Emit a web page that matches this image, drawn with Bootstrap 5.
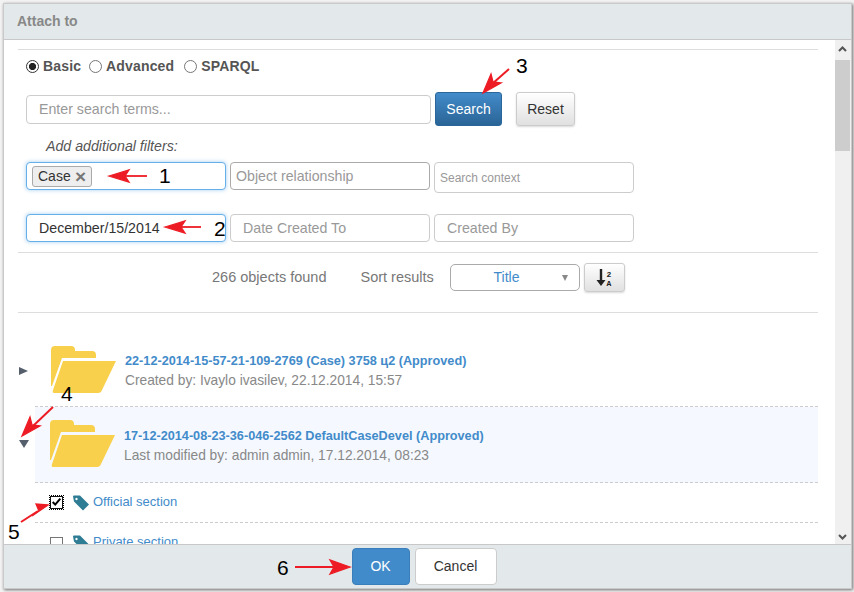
<!DOCTYPE html>
<html lang="en">
<head>
<meta charset="utf-8">
<title>Attach to</title>
<link rel="stylesheet" href="https://cdn.jsdelivr.net/npm/bootstrap@5.3.0/dist/css/bootstrap.min.css">
<style>
html,body{height:100%;margin:0;overflow:hidden}
body{background:#f3f3f3;font-family:"Liberation Sans",Arial,sans-serif;font-size:14px;color:#333;position:relative}
.dlg{position:relative;display:flex;flex-direction:column;width:849px;height:586px;margin:3px 0 0 3px;background:#fff;border:1px solid #c9c9c9;box-shadow:1px 1px 3px rgba(0,0,0,.55)}
.dlg-head{height:36px;flex:none;background:#e3e9ea;border-bottom:1px solid #c8c8c8;padding:0 13px;display:flex;align-items:center;font-weight:700;color:#888}
.dlg-mid{flex:1 1 auto;min-height:0;display:flex}
.pane{flex:1 1 auto;min-width:0;overflow:hidden;padding:9px 17px 0 14px}
.sbar{flex:none;width:16px;background:#f0f0f0;display:flex;flex-direction:column;align-items:stretch;padding-right:1px}
.sbar svg{display:block;margin:6px auto 0}
.thumb{height:91px;margin-top:8px;background:#cdcdcd}
.sbar .down{margin-top:auto;margin-bottom:4px}
.dlg-foot{flex:none;height:44px;background:#e3e9ea;border-top:1px solid #c8c8c8;display:flex;align-items:center;justify-content:center;gap:5px;padding-right:7px}
.rule{height:1px;background:#ddd;margin:0}
.modes{display:flex;align-items:center;padding:0 0 0 8px;height:33px;font-weight:700;color:#555;letter-spacing:.15px}
.modes label{display:flex;align-items:center;gap:4px;margin-right:8px}
.modes label+label{margin-right:10px}
.modes input{width:13px;height:13px;margin:0;border:1px solid #767676;background:#fff}
.modes input:checked{background:radial-gradient(circle,#222 0 3.3px,#fff 3.9px);border-color:#333}
.modes input:focus{box-shadow:none;border-color:#333}
.searchrow{display:flex;align-items:center;margin:9px 0 0 8px;height:34px}
.fld{display:flex;align-items:center;border:1px solid #ccc;border-radius:4px;background:#fff;font-size:14.2px;color:#333;padding:0 12px;box-shadow:none}
.fld::placeholder{color:#999}
input.fld:focus{border-color:#ccc;box-shadow:none}
.fld-q{width:405px;height:29px}
.btn-find,.btn-clear{height:34px;font-size:14px;padding:0;border-radius:3px}
.btn-find{width:67px;margin-left:4px;color:#fff;border:1px solid #2b669a;background:linear-gradient(#428bca,#2a6496)}
.btn-clear{width:59px;margin-left:14px;color:#333;border:1px solid #ccc;background:linear-gradient(#fff,#e0e0e0);box-shadow:0 1px 2px rgba(0,0,0,.15)}
.hint{margin:10px 0 0 28px;height:20px;line-height:20px;font-style:italic;color:#555;font-size:14.2px}
.filters{display:flex;gap:4px;margin:6px 0 0 8px;height:32px;align-items:flex-start}
.filters.second{margin-top:20px;height:28px}
.filters .fld{width:200px;height:28px}
.on{border-color:#66afe9;box-shadow:0 0 4px rgba(102,175,233,.6)}
input.on:focus{border-color:#66afe9;box-shadow:0 0 4px rgba(102,175,233,.6)}
.dark{border-color:#aaa;padding-left:5px}
input.dark:focus{border-color:#aaa}
.chip{display:inline-flex;align-items:center;justify-content:space-between;width:60px;height:21px;padding:0 5px;background:#eee;border:1px solid #aaa;border-radius:3px;margin-left:-7px;color:#333;font-size:14px}
.chip b{color:#777;font-size:19px;line-height:19px}
.filters .ctx{font-size:12px;padding-left:5px;height:31px}
.rule2{margin-top:10px}
.sortrow{display:flex;align-items:center;height:59px;padding:0 0 10px 194px;color:#777;font-size:14.5px}
.sortrow .lbl2{margin-left:34px;width:75px;white-space:nowrap}
.pick{width:130px;height:27px;margin-left:15px;padding:0 18px 0 0;text-align:center;text-align-last:center;font-size:14px;color:#428bca;border:1px solid #aaa;border-radius:5px;background-color:#fff;background-image:url("data:image/svg+xml,%3Csvg xmlns='http://www.w3.org/2000/svg' width='10' height='6'%3E%3Cpath d='M2 0h6l-3 6z' fill='%23888'/%3E%3C/svg%3E");background-position:right 9px center;background-size:10px 6px;background-repeat:no-repeat}
.pick:focus{border-color:#aaa;box-shadow:none}
.btn-order{width:41px;height:29px;margin-left:4px;padding:0;display:flex;align-items:center;justify-content:center;border:1px solid #ccc;border-radius:3px;background:linear-gradient(#fff,#e0e0e0);box-shadow:0 1px 2px rgba(0,0,0,.15)}
.item{display:flex;align-items:center;position:relative;margin-left:17px}
.item1{height:61px;margin-top:33px;border-bottom:1px dashed #ccc;padding-left:16px;align-items:flex-start}
.item2{height:76px;background:#f5f9ff;border-bottom:1px dashed #ccc;padding-left:15px;align-items:flex-start;padding-top:13px}
.item1 .tx{margin:7px 0 0 9px}
.item2 .tx{margin:8px 0 0 9px}
.tx a{display:block;font-weight:700;font-size:12.7px;line-height:16px;color:#428bca;text-decoration:none}
.tx span{display:block;margin-top:4px;font-size:13.75px;line-height:16px;color:#888}
.tri{position:absolute;left:-16px}
.sect{display:flex;align-items:center;height:40px;border-bottom:1px dashed #ccc;margin-left:17px;padding-left:15px}
.sect.last{border:0}
.sect input[type=checkbox]{width:13px;height:13px;margin:0 10px 0 0;border:1px solid #767676;border-radius:0;flex:none}
.sect input[type=checkbox]:checked{background-color:#fff;border-color:#111;outline:1px dotted #000;background-image:url("data:image/svg+xml,%3Csvg xmlns='http://www.w3.org/2000/svg' viewBox='0 0 13 13'%3E%3Cpath d='M2 6l3 3 6-7' fill='none' stroke='%23000' stroke-width='2.4'/%3E%3C/svg%3E")}
.sect input:focus{box-shadow:none}
.sect a{margin-left:4px;font-size:13px;color:#428bca;text-decoration:none;position:relative;top:-1px}
.btn-ok,.btn-no{height:37px;font-size:14px;padding:0;border-radius:4px}
.btn-ok{width:58px;background:#428bca;border:1px solid #3a7fbb;color:#fff}
.btn-no{width:82px;background:#fff;border:1px solid #ccc;color:#333}
.marks{position:absolute;left:0;top:0;pointer-events:none}
.num{position:absolute;font-size:21px;line-height:24px;color:#000}
</style>
</head>
<body>
<div class="dlg">
  <div class="dlg-head">Attach to</div>
  <div class="dlg-mid">
    <div class="pane">
      <div class="rule"></div>
      <div class="modes">
        <label><input class="form-check-input" type="radio" name="m" checked>Basic</label>
        <label><input class="form-check-input" type="radio" name="m">Advanced</label>
        <label><input class="form-check-input" type="radio" name="m">SPARQL</label>
      </div>
      <div class="searchrow">
        <input class="form-control fld fld-q" placeholder="Enter search terms...">
        <button type="button" class="btn btn-find">Search</button>
        <button type="button" class="btn btn-clear">Reset</button>
      </div>
      <div class="hint">Add additional filters:</div>
      <div class="filters">
        <div class="fld on"><span class="chip">Case <b>×</b></span></div>
        <input class="form-control fld dark" placeholder="Object relationship">
        <input class="form-control fld ctx" placeholder="Search context">
      </div>
      <div class="filters second">
        <input class="form-control fld on" value="December/15/2014">
        <input class="form-control fld" placeholder="Date Created To">
        <input class="form-control fld" placeholder="Created By">
      </div>
      <div class="rule rule2"></div>
      <div class="sortrow">
        <span>266 objects found</span>
        <span class="lbl2">Sort results</span>
        <select class="form-select pick"><option>Title</option></select>
        <button type="button" class="btn btn-order" aria-label="Sort order">
          <svg width="20" height="20" viewBox="0 0 20 20"><path d="M6 1v13" stroke="#222" stroke-width="2.4"/><path d="M1.500 12h9L6 18z" fill="#222"/><text x="11.500" y="9" font-size="8" font-weight="700" font-family="Liberation Mono" fill="#222">2</text><text x="11.500" y="18" font-size="8" font-weight="700" font-family="Liberation Mono" fill="#222">A</text></svg>
        </button>
      </div>
      <div class="rule"></div>
      <div class="item item1">
        <svg class="tri" style="top:20px" width="10" height="10" viewBox="0 0 10 10"><path d="M0 1l9 4-9 4z" fill="#555f6b"/></svg>
        <svg class="folder" width="65" height="47" viewBox="0 0 65 47"><path d="M0 4q0-4 4-4h16q4 0 4 4v1h17q4 0 4 4v3H11L1 40H0z" fill="#f9d04b"/><path d="M12 15h53L51 44q-1 3-4 3H3q-2 0-1-3z" fill="#f9d04b"/></svg>
        <div class="tx"><a href="#">22-12-2014-15-57-21-109-2769 (Case) 3758 ц2 (Approved)</a><span>Created by: Ivaylo ivasilev, 22.12.2014, 15:57</span></div>
      </div>
      <div class="item item2">
        <svg class="tri" style="top:32px" width="10" height="10" viewBox="0 0 10 10"><path d="M0 1h10L5 9z" fill="#555f6b"/></svg>
        <svg class="folder" width="65" height="47" viewBox="0 0 65 47"><path d="M0 4q0-4 4-4h16q4 0 4 4v1h17q4 0 4 4v3H11L1 40H0z" fill="#f9d04b"/><path d="M12 15h53L51 44q-1 3-4 3H3q-2 0-1-3z" fill="#f9d04b"/></svg>
        <div class="tx"><a href="#">17-12-2014-08-23-36-046-2562 DefaultCaseDevel (Approved)</a><span>Last modified by: admin admin, 17.12.2014, 08:23</span></div>
      </div>
      <div class="sect">
        <input class="form-check-input" type="checkbox" checked>
        <svg width="16" height="16" viewBox="0 0 16 16"><path fill-rule="evenodd" d="M0 1.500Q0 .5 1 .5h6L16 9.500 10 15.500 1 6.500zM3.500 2.800a1.200 1.200 0 1 0 .01 0z" fill="#2f7d95"/></svg>
        <a href="#">Official section</a>
      </div>
      <div class="sect last">
        <input class="form-check-input" type="checkbox">
        <svg width="16" height="16" viewBox="0 0 16 16"><path fill-rule="evenodd" d="M0 1.500Q0 .5 1 .5h6L16 9.500 10 15.500 1 6.500zM3.500 2.800a1.200 1.200 0 1 0 .01 0z" fill="#2f7d95"/></svg>
        <a href="#">Private section</a>
      </div>
    </div>
    <div class="sbar">
      <svg width="9" height="6" viewBox="0 0 9 6"><path d="M1 5l3.500-3.500L8 5" fill="none" stroke="#555" stroke-width="2"/></svg>
      <div class="thumb"></div>
      <svg class="down" width="9" height="6" viewBox="0 0 9 6"><path d="M1 1l3.500 3.500L8 1" fill="none" stroke="#555" stroke-width="2"/></svg>
    </div>
  </div>
  <div class="dlg-foot">
    <button type="button" class="btn btn-ok">OK</button>
    <button type="button" class="btn btn-no">Cancel</button>
  </div>
</div>
<svg class="marks" width="854" height="592" viewBox="0 0 854 592">
  <g fill="#ed1c24" stroke="#ed1c24" stroke-width="1.300">
    <path d="M147 176H122" fill="none" stroke-width="1.800"/><path d="M109 176l20-6-4 6 4 6z"/>
    <path d="M201 227H178" fill="none" stroke-width="1.800"/><path d="M165 227l20-6-4 6 4 6z"/>
    <path d="M509 69L492 84" fill="none" stroke-width="2"/><path d="M483 93l8-19 2 8 8 1z"/>
    <path d="M53 407L33 426" fill="none" stroke-width="2"/><path d="M22 436l8-19 2 8 8 1z"/>
    <path d="M21 522L38 511" fill="none" stroke-width="2"/><path d="M48 505l-12-1 3 7-7 5z"/>
    <path d="M295 567H338" fill="none" stroke-width="1.800"/><path d="M350 567l-20-7 4 7-4 7z"/>
  </g>
</svg>
<span class="num" style="left:159px;top:164px">1</span>
<span class="num" style="left:214px;top:217px">2</span>
<span class="num" style="left:516px;top:54px">3</span>
<span class="num" style="left:61px;top:382px">4</span>
<span class="num" style="left:8px;top:520px">5</span>
<span class="num" style="left:277px;top:556px">6</span>
</body>
</html>
